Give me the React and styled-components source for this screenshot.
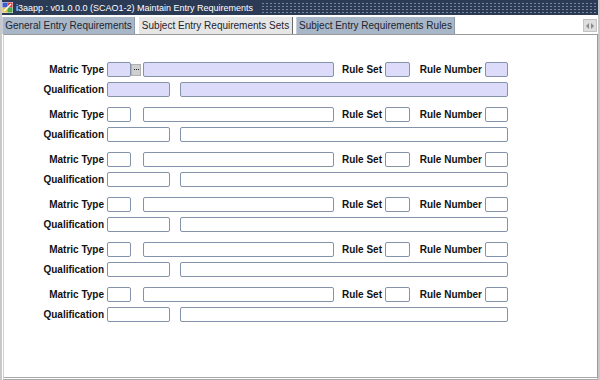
import styled, { createGlobalStyle } from "styled-components"

const Global = createGlobalStyle`
    html, body {
        margin: 0;
        padding: 0;
        background: #ffffff;
    }
    body {
        font-family: "Liberation Sans", Arial, sans-serif;
    }
`

const Window = styled.div`
    width: 600px;
    height: 380px;
    display: flex;
    flex-direction: column;
    background: #ffffff;
    box-sizing: border-box;
    border-left: 2px solid #c8c8c8;
    border-right: 2px solid #c8c8c8;
    overflow: hidden;
`

const TitleBar = styled.div`
    height: 15px;
    flex: none;
    display: flex;
    align-items: center;
    background: #2c3b55;
    margin-left: -2px;
    margin-right: -2px;
    padding-left: 2px;
    padding-right: 3px;
    .caption{
        color: #ffffff;
        font-size: 9px;
        margin-left: 3px;
        white-space: nowrap;
    }
    .dots{
        flex: 1;
        height: 11px;
        margin-left: 8px;
        background-image: radial-gradient(circle, #7a879c 0.7px, transparent 0.9px);
        background-size: 4px 3px;
    }
`

const TabStrip = styled.div`
    height: 18px;
    flex: none;
    display: flex;
    align-items: flex-end;
    padding-top: 1px;
    background: #ffffff;
`

const Tab = styled.div`
    width: ${p => p.$w}px;
    height: 17px;
    box-sizing: border-box;
    display: flex;
    align-items: center;
    justify-content: center;
    margin-right: 3px;
    font-size: 10px;
    color: #1e2430;
    white-space: nowrap;
    background: ${p => p.$active ? "#e6e6e6" : "#a8b7c7"};
    border-left: 1px solid ${p => p.$active ? "#ffffff" : "#c4cfdb"};
    border-right: 1px solid ${p => p.$active ? "#6b6b6b" : "#8e9cab"};
`

const ScrollButton = styled.div`
    margin-left: auto;
    margin-right: 1px;
    margin-bottom: 2px;
    width: 14px;
    height: 13px;
    box-sizing: border-box;
    background: #dedede;
    border: 1px solid #c4c4c4;
    display: flex;
    align-items: center;
    justify-content: center;
`

const Panel = styled.div`
    flex: 1;
    border-top: 1px solid #9a9a9a;
    border-bottom: 3px double #a8a8a8;
    border-right: 1px solid #9a9a9a;
    border-left: 1px solid #d0d0d0;
    padding-top: 27px;
    margin-left: 1px;
    background: #ffffff;
`

const Record = styled.div`
    display: flex;
    flex-direction: column;
    gap: 5px;
    margin-bottom: 10px;
`

const Row = styled.div`
    display: flex;
    align-items: center;
    height: 15px;
`

const Label = styled.div`
    width: ${p => p.$w}px;
    flex: none;
    text-align: right;
    padding-right: 3px;
    box-sizing: border-box;
    font-size: 10px;
    font-weight: 700;
    color: #111111;
    white-space: nowrap;
`

const Field = styled.div`
    width: ${p => p.$w}px;
    height: 15px;
    flex: none;
    box-sizing: border-box;
    border: 1px solid #8493aa;
    border-radius: 2px;
    background: ${p => p.$current ? "#dcdcfa" : "#ffffff"};
    margin-right: ${p => p.$mr || 0}px;
`

const LookupSlot = styled.div`
    width: 12px;
    flex: none;
    height: 15px;
    display: flex;
    align-items: center;
`

const LookupButton = styled.div`
    width: 10px;
    height: 12px;
    background: #cfcfcf;
    border: 1px solid #b0b0b0;
    box-sizing: border-box;
    display: flex;
    align-items: center;
    justify-content: center;
    gap: 1px;
    span{
        width: 1px;
        height: 1px;
        background: #222;
    }
`

const AppIcon = () => (
    <svg width="11" height="11" viewBox="0 0 11 11">
        <rect x="0" y="0" width="11" height="11" fill="#e8e8f0" />
        <rect x="0.5" y="0.5" width="5" height="5" fill="#3a5fcf" />
        <rect x="5.5" y="0.5" width="5" height="5" fill="#d93a3a" />
        <rect x="0.5" y="5.5" width="5" height="5" fill="#e8c23a" />
        <rect x="5.5" y="5.5" width="5" height="5" fill="#4aa84a" />
        <path d="M2 9 L9 2" stroke="#ffffff" strokeWidth="1.4" />
    </svg>
)

const ScrollArrows = () => (
    <svg width="8" height="6" viewBox="0 0 8 6">
        <path d="M3 0 L0 3 L3 6 Z" fill="#8a8a8a" />
        <path d="M5 0 L8 3 L5 6 Z" fill="#8a8a8a" />
    </svg>
)

const RecordBlock = ({current}) => (
    <Record>
        <Row>
            <Label $w={103}>Matric Type</Label>
            <Field $w={24} $current={current} />
            <LookupSlot>{current && <LookupButton><span /><span /><span /></LookupButton>}</LookupSlot>
            <Field $w={191} $current={current} />
            <Label $w={51}>Rule Set</Label>
            <Field $w={25} $current={current} />
            <Label $w={75}>Rule Number</Label>
            <Field $w={23} $current={current} />
        </Row>
        <Row>
            <Label $w={103}>Qualification</Label>
            <Field $w={63} $mr={10} $current={current} />
            <Field $w={328} $current={current} />
        </Row>
    </Record>
)

export default function App(){
    const records = [true, false, false, false, false, false]
    return(
        <>
            <Global />
            <Window>
                <TitleBar>
                    <AppIcon />
                    <span className="caption">i3aapp : v01.0.0.0 (SCAO1-2) Maintain Entry Requirements</span>
                    <div className="dots" />
                </TitleBar>
                <TabStrip>
                    <Tab $w={133}>General Entry Requirements</Tab>
                    <Tab $w={155} $active>Subject Entry Requirements Sets</Tab>
                    <Tab $w={159}>Subject Entry Requirements Rules</Tab>
                    <ScrollButton><ScrollArrows /></ScrollButton>
                </TabStrip>
                <Panel>
                    {records.map((cur, i) => <RecordBlock key={i} current={cur} />)}
                </Panel>
            </Window>
        </>
    )
}
